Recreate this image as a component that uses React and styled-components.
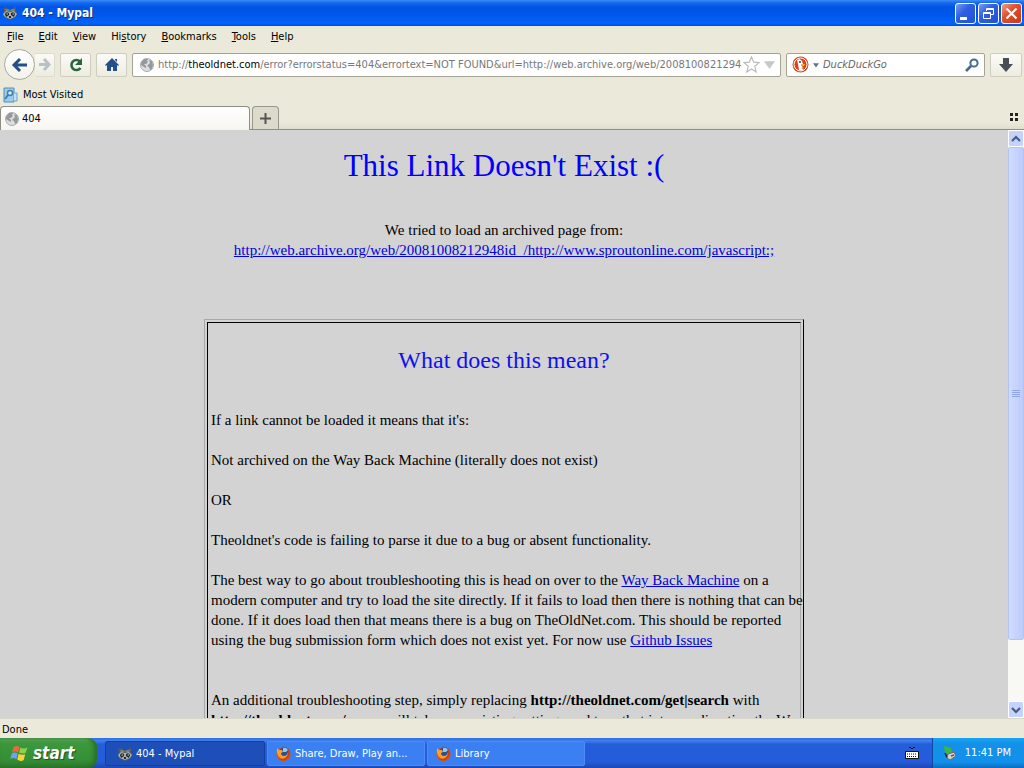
import React from "react";
import styled, { createGlobalStyle, css } from "styled-components";

const Global = createGlobalStyle`
  * { box-sizing: border-box; }
  body { margin: 0; }
  button { font: inherit; color: inherit; padding: 0; margin: 0; cursor: pointer; }
`;

const Desktop = styled.div`
  height: 100vh;
  display: flex;
  flex-direction: column;
  overflow: hidden;
  font: 11px/14px "DejaVu Sans Condensed", Tahoma, "DejaVu Sans", sans-serif;
  color: #000;
  background: #ebe9d9;
`;

const TitleBar = styled.header`
  display: flex;
  align-items: center;
  flex: none;
  height: 26px;
  padding: 0 2px;
  gap: 4px;
  background: linear-gradient(#3a8cf8 0, #1468ee 3px, #0054e4 7px, #0058ec 16px, #0264fc 23px, #0050e0 26px);
`;

const WindowTitle = styled.h1`
  flex: 1;
  margin: 0;
  font: bold 12px/16px "DejaVu Sans Condensed", Tahoma, sans-serif;
  color: #fff;
  text-shadow: 1px 1px #0a3080;
`;

const CaptionButton = styled.button`
  width: 21px;
  height: 21px;
  margin-left: -2px;
  border: 1px solid #fff;
  border-radius: 3px;
  display: grid;
  place-items: center;
  background: ${(p) =>
    p.$close
      ? "linear-gradient(135deg, #f0a080, #e05030 40%, #c83810)"
      : "linear-gradient(135deg, #7a9cf4, #3060e0 40%, #2050d8)"};
`;

const MenuBar = styled.nav`
  display: flex;
  flex: none;
  height: 21px;
  align-items: center;
  padding: 0 1px;
`;

const MenuItem = styled.button`
  border: 0;
  background: none;
  padding: 0 6px;
  margin-right: 3px;
`;

const NavBar = styled.div`
  display: flex;
  flex: none;
  align-items: center;
  height: 35px;
  padding: 0 2px 0 4px;
  gap: 5px;
`;

const HistoryButtons = styled.div`
  display: flex;
  align-items: center;
`;

const BackButton = styled.button`
  width: 31px;
  height: 31px;
  border: 1px solid #aaa9a0;
  border-radius: 50%;
  background: linear-gradient(#fff, #f3f2ea);
  display: grid;
  place-items: center;
`;

const ToolButton = styled.button`
  display: grid;
  place-items: center;
  flex: none;
  width: ${(p) => p.$width || 32}px;
  height: 24px;
  border: 1px solid #cfcdbd;
  border-radius: 2px;
  background: linear-gradient(#fbfaf6, #eeece0);
  ${(p) => p.$joined && css`
    border-left: 0;
    border-color: #dddbcd;
  `}
`;

const Field = styled.div`
  display: flex;
  align-items: center;
  height: 24px;
  padding: 0 5px;
  border: 1px solid #a5a396;
  border-radius: 2px;
  background: #fff;
  min-width: 0;
`;

const AddressField = styled(Field)`
  flex: 1;
  padding-left: 7px;
`;

const Address = styled.div`
  flex: 1;
  min-width: 0;
  padding-left: 4px;
  white-space: nowrap;
  color: #77777b;
  b { font-weight: normal; color: #000; }
`;

const SearchField = styled(Field)`
  width: 199px;
  gap: 4px;
`;

const SearchInput = styled.input`
  flex: 1;
  min-width: 0;
  border: 0;
  padding: 0;
  background: none;
  font: inherit;
  outline: 0;
  &::placeholder { color: #666; font-style: italic; opacity: 1; }
`;

const IconButton = styled.button`
  border: 0;
  background: none;
  display: grid;
  place-items: center;
`;

const HistoryArrow = styled(IconButton)`
  margin-left: 4px;
`;

const BookmarkBar = styled.div`
  display: flex;
  flex: none;
  align-items: center;
  height: 24px;
  padding: 1px 3px 0;
`;

const Bookmark = styled.button`
  display: flex;
  align-items: center;
  gap: 5px;
  border: 0;
  background: none;
`;

const TabBar = styled.div`
  display: flex;
  flex: none;
  align-items: flex-end;
  height: 24px;
  gap: 2px;
  padding-right: 5px;
  border-bottom: 1px solid #8f8e85;
  background: linear-gradient(#ebe9d9 70%, #e0decf);
`;

const Tab = styled.button`
  display: flex;
  align-items: center;
  gap: 3px;
  width: 250px;
  height: 24px;
  padding: 0 4px;
  margin-bottom: -1px;
  border: 1px solid #8f8e85;
  border-bottom: 0;
  border-radius: 4px 4px 0 0;
  background: linear-gradient(#fff, #f6f5f0);
`;

const NewTab = styled.button`
  width: 27px;
  height: 23px;
  border: 1px solid #99978c;
  border-bottom: 0;
  border-radius: 4px 4px 0 0;
  background: #dcdacb;
  display: grid;
  place-items: center;
`;

const TabGroups = styled(IconButton)`
  margin: 0 0 7px auto;
`;

const Viewport = styled.div`
  display: flex;
  flex: 1;
  min-height: 0;
`;

const Page = styled.main`
  flex: 1;
  min-width: 0;
  overflow: hidden;
  background: #d3d3d3;
  font: 15px/20px "Liberation Serif", serif;
  a { color: #0000e0; }
`;

const PageTitle = styled.h2`
  margin: 17px 0 0;
  font-weight: normal;
  font-size: 31px;
  line-height: 37px;
  text-align: center;
  color: #00f;
`;

const Intro = styled.p`
  margin: 36px 0 59px;
  text-align: center;
`;

const Panel = styled.section`
  width: 600px;
  max-width: 100%;
  margin: 0 auto;
  padding: 2px;
  border: 1px solid;
  border-color: #a8a8a8 #000 #000 #a8a8a8;
`;

const PanelBody = styled.div`
  padding: 3px;
  border: 1px solid;
  border-color: #000 #a8a8a8 #a8a8a8 #000;
  white-space: nowrap;
  p { margin: 0 0 20px; }
  p.gap { margin-bottom: 40px; }
`;

const PanelTitle = styled.h3`
  margin: 20px 0 36px;
  font-weight: normal;
  font-size: 24px;
  line-height: 28px;
  text-align: center;
  color: #1010f0;
`;

const ScrollBar = styled.div`
  display: flex;
  flex-direction: column;
  flex: none;
  width: 16px;
  background: #f8f8f4;
`;

const ScrollArrow = styled.button`
  flex: none;
  height: 17px;
  border: 1px solid #fff;
  border-radius: 2px;
  background: #c5d3fb;
  display: grid;
  place-items: center;
`;

const ScrollTrack = styled.div`
  flex: 1;
  display: flex;
  flex-direction: column;
`;

const ScrollThumb = styled.div`
  height: 89%;
  border: 1px solid #b3c5f2;
  border-radius: 2px;
  background: linear-gradient(90deg, #d0dcff, #bccbfa);
  display: grid;
  place-items: center;
`;

const StatusBar = styled.footer`
  flex: none;
  height: 20px;
  padding: 4px 2px 0;
  border-top: 1px solid #d8d6c8;
`;

const TaskBar = styled.div`
  display: flex;
  flex: none;
  height: 30px;
  background: linear-gradient(#2f6fe0, #3d80ee 3px, #245edb 6px, #245bd8 24px, #1c48b0);
  color: #fff;
`;

const StartButton = styled.button`
  display: flex;
  align-items: center;
  gap: 5px;
  width: 97px;
  padding-left: 10px;
  border: 0;
  border-radius: 0 9px 9px 0;
  background: linear-gradient(#62ad62, #3c983c 5px, #358f35 22px, #2b762b);
  box-shadow: inset -3px 0 4px #2a6c2a;
  font: italic bold 17px/20px "DejaVu Sans Condensed", "DejaVu Sans", sans-serif;
  color: #fff;
  text-shadow: 1px 1px 1px #234f23;
`;

const Tasks = styled.div`
  display: flex;
  flex: 1;
  align-items: flex-start;
  gap: 2px;
  padding: 3px 8px;
`;

const Task = styled.button`
  display: flex;
  align-items: center;
  gap: 3px;
  width: ${(p) => (p.$active ? 160 : 158)}px;
  height: 25px;
  padding: 0 ${(p) => (p.$active ? 11 : 7)}px;
  border: 1px solid ${(p) => (p.$active ? "#163f98" : "#4d8cf6")};
  border-radius: 2px;
  background: ${(p) => (p.$active ? "#1e4fb8" : "#3a80f2")};
  color: #fff;
  white-space: nowrap;
`;

const Tray = styled.div`
  display: flex;
  align-items: center;
  justify-content: space-between;
  width: 92px;
  padding: 0 13px 0 9px;
  border-left: 1px solid #0b4a9c;
  background: linear-gradient(#1aa6f0, #1290ea 6px, #1290ea 24px, #0f6cc0);
`;

const Keyboard = styled(IconButton)`
  margin-right: 13px;
`;

const Raccoon = () => (
  <svg width="16" height="16" viewBox="0 0 16 16" aria-hidden="true">
    <path d="M1 3l3-1 2 2h4l4-3v5l1 3-3 4-4 2-4-2-3-3 1-4z" fill="#565c5e" />
    <path d="M3 4h3l2 2 2-2h3l-1 2H4z" fill="#7b8284" />
    <path d="M1 9l3-3 4 1 4-1 3 3-2 3-5 2-5-2z" fill="#a9b0b0" />
    <path d="M3 9q1-3 4-1l0 2-3 2zM9 8q3-2 4 1l-1 3-3-2z" fill="#1d2426" />
    <path d="M4.500 8.500h1.500v1H4.500zM10.500 8.500H12v1h-1.500z" fill="#cfd8d8" />
    <path d="M7 11h2v2H7z" fill="#222" />
  </svg>
);

const Globe = () => (
  <svg width="14" height="14" viewBox="0 0 14 14" aria-hidden="true">
    <circle cx="7" cy="7" r="6.500" fill="#dcdddf" stroke="#a9abad" />
    <path d="M1 5l3-4h4L7 3l1 1-2 2H4l2 2v2l-2-1-3-2zM9 2l3 1 1 4-1 4-2 1-1-3-2-1 2-2 1-1z" fill="#96999c" />
  </svg>
);

const Firefox = () => (
  <svg width="17" height="16" viewBox="0 0 17 16" aria-hidden="true">
    <circle cx="8.500" cy="8" r="7.200" fill="#d9540f" />
    <circle cx="9" cy="6.500" r="5" fill="#2a4f94" />
    <path d="M8 2l3 0 2 2-2 2-3 0z" fill="#8ec6ee" />
    <path d="M2 2l2 2h3l1 2-2 1q0 3 3 3 3 0 4-4 1 4-2 6-4 2-7-1Q1 7 2 2z" fill="#f9a02a" />
    <path d="M13 2q4 5 0 10-5 5-10 0 4 2 7 0 4-3 3-10" fill="#c8430f" />
  </svg>
);

const WindowsFlag = () => (
  <svg width="18" height="18" viewBox="0 0 18 18" aria-hidden="true">
    <path d="M3.500 3q3-2 6 0L8 8.500q-3-2-6 0z" fill="#f0683a" />
    <path d="M10.500 3.500q3 2 7 0l-2 5.500q-3 1-6.500-.5z" fill="#8fd04b" />
    <path d="M1.700 9.500q3-2 6 0L6.300 15q-3-2-6 0z" fill="#6ea0f4" />
    <path d="M8.700 9.700q3 2 6.500.5L13.700 16q-3 2-6.500-.5z" fill="#fbd43b" />
  </svg>
);

const DuckLogo = () => (
  <svg width="17" height="17" viewBox="0 0 17 17" aria-hidden="true">
    <circle cx="8.500" cy="8.500" r="8" fill="#d9441f" />
    <circle cx="8.500" cy="8.500" r="6.500" fill="none" stroke="#fff" />
    <path d="M5 4q3-2 5 1l1 3-1 1 1 5q-2 1-4 0L6 8z" fill="#fff" />
    <path d="M9 8h4l-1 2H9z" fill="#f7b51c" />
    <path d="M9 12l3-1v2z" fill="#62ae35" />
    <circle cx="8" cy="6" r="1" fill="#344" />
  </svg>
);

const Chevron = ({ down }) => (
  <svg width="10" height="8" viewBox="0 0 10 8" aria-hidden="true">
    <path d={down ? "M1 2l4 4 4-4" : "M1 6l4-4 4 4"} fill="none" stroke="#435c8c" strokeWidth="2.200" />
  </svg>
);

const Triangle = ({ size, color }) => (
  <svg width={size} height={size} viewBox="0 0 10 10" aria-hidden="true">
    <path d="M0 2h10L5 9z" fill={color} />
  </svg>
);

const menus = [
  { text: "File", key: 0 },
  { text: "Edit", key: 0 },
  { text: "View", key: 0 },
  { text: "History", key: 2 },
  { text: "Bookmarks", key: 0 },
  { text: "Tools", key: 0 },
  { text: "Help", key: 0 },
];

export default function App() {
  return (
    <Desktop>
      <Global />
      <TitleBar>
        <Raccoon />
        <WindowTitle>404 - Mypal</WindowTitle>
        <CaptionButton aria-label="Minimize">
          <svg width="17" height="17"><path d="M3 12h7v3H3z" fill="#fff" /></svg>
        </CaptionButton>
        <CaptionButton aria-label="Restore">
          <svg width="17" height="17" fill="none" stroke="#fff">
            <path d="M6.500 6V3.500h7v6H11M6 4.500h8M3.500 7.500h7v6h-7zM3 8.500h8" />
          </svg>
        </CaptionButton>
        <CaptionButton $close aria-label="Close">
          <svg width="17" height="17"><path d="M3.500 3.500l10 10m0-10l-10 10" stroke="#fff" strokeWidth="2.200" /></svg>
        </CaptionButton>
      </TitleBar>
      <MenuBar>
        {menus.map(({ text, key }) => (
          <MenuItem key={text}>
            {text.slice(0, key)}<u>{text[key]}</u>{text.slice(key + 1)}
          </MenuItem>
        ))}
      </MenuBar>
      <NavBar>
        <HistoryButtons>
          <BackButton aria-label="Back">
            <svg width="17" height="16"><path d="M9 2L3 8l6 6M4 8h12" fill="none" stroke="#23508c" strokeWidth="3" /></svg>
          </BackButton>
          <ToolButton $joined $width={20} aria-label="Forward">
            <svg width="13" height="13"><path d="M6 1l5 5.500-5 5.500M1 6.500h10" fill="none" stroke="#b7c1c6" strokeWidth="3" /></svg>
          </ToolButton>
        </HistoryButtons>
        <ToolButton $width={31} aria-label="Reload">
          <svg width="16" height="16">
            <path d="M12 4.500A5 5 0 1 0 12.500 11" fill="none" stroke="#2c6640" strokeWidth="2.600" />
            <path d="M14 1v7H7z" fill="#2c6640" />
          </svg>
        </ToolButton>
        <ToolButton $width={31} aria-label="Home">
          <svg width="16" height="16">
            <path d="M8 1l7 7-1 1-1-1v6H9v-4H7v4H3V8L2 9 1 8zM11 2h2v3l-2-2z" fill="#244f8d" />
          </svg>
        </ToolButton>
        <AddressField>
          <Globe />
          <Address>
            http://<b>theoldnet.com</b>/error?errorstatus=404&amp;errortext=NOT FOUND&amp;url=http://web.archive.org/web/2008100821294
          </Address>
          <IconButton aria-label="Bookmark this page">
            <svg width="17" height="17"><path d="M8.500 1l2.200 5.200 5.300.4-4.200 3.700 1.400 5.700-4.700-3-4.700 3 1.400-5.700L1 6.600l5.300-.4z" fill="#fff" stroke="#bbb" strokeWidth="1.200" /></svg>
          </IconButton>
          <HistoryArrow aria-label="Show history"><Triangle size={11} color="#c8c8c8" /></HistoryArrow>
        </AddressField>
        <SearchField>
          <DuckLogo />
          <IconButton aria-label="Choose search engine"><Triangle size={6} color="#65738a" /></IconButton>
          <SearchInput aria-label="Search" placeholder="DuckDuckGo" />
          <IconButton aria-label="Go">
            <svg width="14" height="14"><circle cx="9" cy="5" r="3.600" fill="none" stroke="#446a94" strokeWidth="2" /><path d="M6 8l-5 5" stroke="#446a94" strokeWidth="2.600" /></svg>
          </IconButton>
        </SearchField>
        <ToolButton aria-label="Downloads">
          <svg width="16" height="16"><path d="M5 1h6v6h4l-7 8-7-8h4z" fill="#484e55" /></svg>
        </ToolButton>
      </NavBar>
      <BookmarkBar>
        <Bookmark>
          <svg width="15" height="16"><path d="M1 1h10v14H1z" fill="#9ccbec" stroke="#4f8fbe" /><path d="M11 6h3v8h-3" fill="#c4e1f3" stroke="#6ea6cd" /><circle cx="7" cy="6" r="2.500" fill="#d7edfa" stroke="#3f7fb0" strokeWidth="1.500" /><path d="M5 8l-3 4" stroke="#3f7fb0" strokeWidth="2" /></svg>
          Most Visited
        </Bookmark>
      </BookmarkBar>
      <TabBar>
        <Tab><Globe />404</Tab>
        <NewTab aria-label="New tab"><svg width="11" height="11"><path d="M5.500 0v11M0 5.500h11" stroke="#555" strokeWidth="2" /></svg></NewTab>
        <TabGroups aria-label="Tab groups"><svg width="9" height="9"><path d="M0 0h3v3H0zM5 0h3v3H5zM0 5h3v3H0zM5 5h3v3H5z" fill="#222" /></svg></TabGroups>
      </TabBar>
      <Viewport>
        <Page>
          <PageTitle>This Link Doesn't Exist :(</PageTitle>
          <Intro>
            We tried to load an archived page from:<br />
            <a href="#archive">http://web.archive.org/web/20081008212948id_/http://www.sproutonline.com/javascript:;</a>
          </Intro>
          <Panel>
            <PanelBody>
              <PanelTitle>What does this mean?</PanelTitle>
              <p>If a link cannot be loaded it means that it's:</p>
              <p>Not archived on the Way Back Machine (literally does not exist)</p>
              <p>OR</p>
              <p>Theoldnet's code is failing to parse it due to a bug or absent functionality.</p>
              <p className="gap">
                The best way to go about troubleshooting this is head on over to the <a href="#wayback">Way Back Machine</a> on a<br />
                modern computer and try to load the site directly. If it fails to load then there is nothing that can be<br />
                done. If it does load then that means there is a bug on TheOldNet.com. This should be reported<br />
                using the bug submission form which does not exist yet. For now use <a href="#issues">Github Issues</a>
              </p>
              <p>
                An additional troubleshooting step, simply replacing <b>http://theoldnet.com/get|search</b> with<br />
                <b>http://theoldnet.com/proxy</b> will take any existing settings and turn that into a redirection the W
              </p>
            </PanelBody>
          </Panel>
        </Page>
        <ScrollBar>
          <ScrollArrow aria-label="Scroll up"><Chevron /></ScrollArrow>
          <ScrollTrack>
            <ScrollThumb>
              <svg width="8" height="8"><path d="M0 .5h8M0 2.500h8M0 4.500h8M0 6.500h8" stroke="#8fa6e0" /></svg>
            </ScrollThumb>
          </ScrollTrack>
          <ScrollArrow aria-label="Scroll down"><Chevron down /></ScrollArrow>
        </ScrollBar>
      </Viewport>
      <StatusBar>Done</StatusBar>
      <TaskBar>
        <StartButton><WindowsFlag />start</StartButton>
        <Tasks>
          <Task $active><Raccoon />404 - Mypal</Task>
          <Task><Firefox />Share, Draw, Play an...</Task>
          <Task><Firefox />Library</Task>
        </Tasks>
        <Keyboard aria-label="Keyboard">
          <svg width="14" height="14"><path d="M4 2q1-2 2 0t2 0 2 0" fill="none" stroke="#111" /><path d="M.5 5.500h13v7H.5z" fill="#fff" stroke="#111" /><path d="M2 8h10M2 10.500h10" stroke="#111" strokeDasharray="1 1" /></svg>
        </Keyboard>
        <Tray>
          <svg width="15" height="16"><path d="M2 1l7 2 1 4-4 3-3-2z" fill="#3cb83c" /><path d="M3 8l2 4 4 1" fill="none" stroke="#222" strokeWidth="1.500" /><path d="M6 9l6-2 2 4-6 4-3-2z" fill="#d0d4d8" stroke="#666" /><path d="M9 11l3-1" stroke="#a33" strokeWidth="1.500" /></svg>
          <time>11:41 PM</time>
        </Tray>
      </TaskBar>
    </Desktop>
  );
}
